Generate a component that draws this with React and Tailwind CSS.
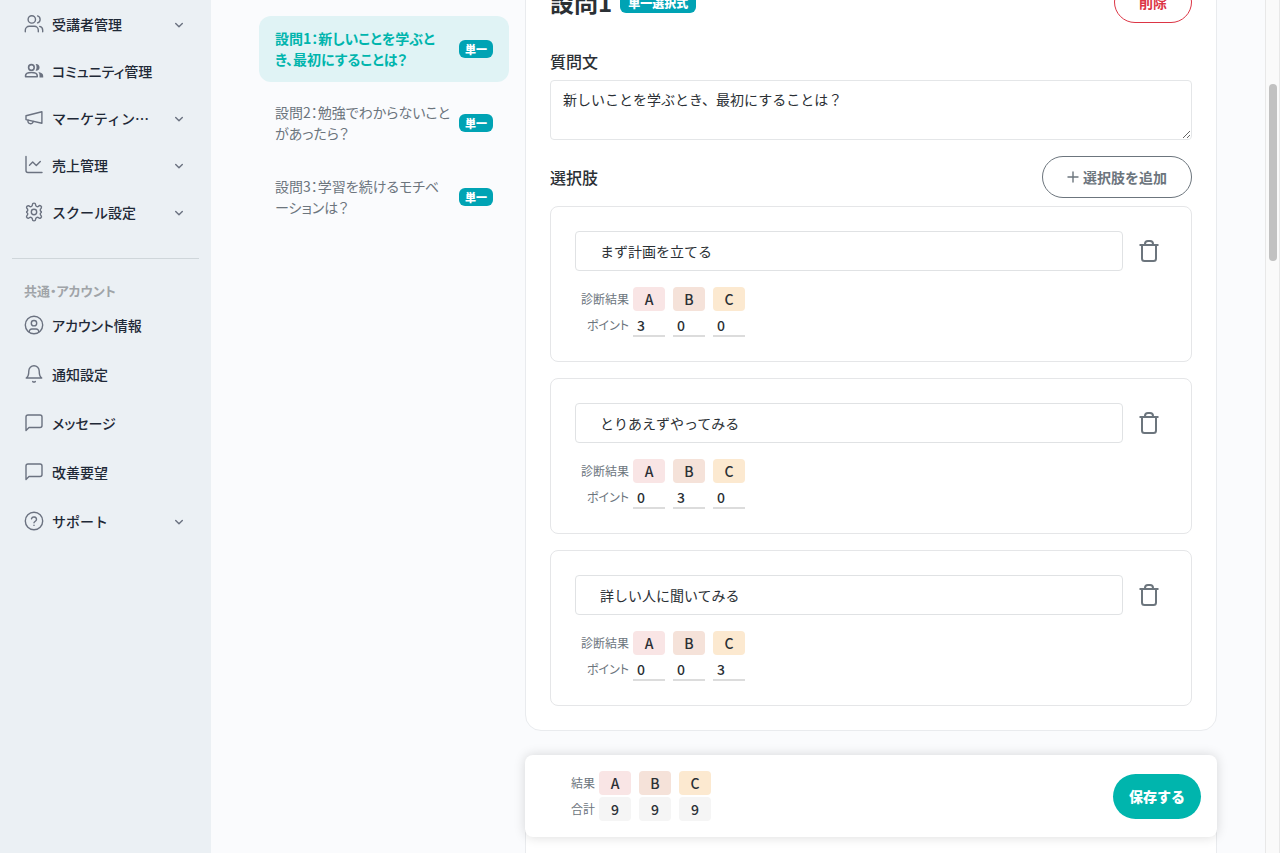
import { useState } from "react";
import clsx from "clsx";

const stroke = {
  width: 20,
  height: 20,
  viewBox: "0 0 20 20",
  fill: "none",
  stroke: "currentColor",
  strokeWidth: 1.4,
  strokeLinecap: "round",
  strokeLinejoin: "round",
  "aria-hidden": true,
};

const UsersIcon = () => (
  <svg {...stroke}>
    <circle cx="7.8" cy="5.4" r="3.7" />
    <path d="M1.3 17.8v-1.6a4 4 0 0 1 4-4h5a4 4 0 0 1 4 4v1.6" />
    <path d="M13.6 1.9a3.7 3.7 0 0 1 0 7M18.7 17.8v-1.6a4 4 0 0 0-3-3.8" />
  </svg>
);

const CommunityIcon = () => (
  <svg {...stroke} strokeWidth="1.6">
    <circle cx="7.4" cy="6.4" r="2.8" />
    <path d="M1.6 15.7v-1.2c0-2 3-3 5.8-3s5.800 1 5.800 3v1.200z" />
    <path d="M11.600 3.100a3.400 3.400 0 1 1 0 6.700c1.300-2 1.300-4.700 0-6.700z" fill="currentColor" stroke="none" />
    <path d="M14.300 11.100c2.700.5 4.900 1.600 4.900 3.600v1.800h-3.700v-2c0-1.400-.4-2.400-1.200-3.400z" fill="currentColor" stroke="none" />
  </svg>
);

const MegaphoneIcon = () => (
  <svg {...stroke}>
    <path d="M2 7.700 17.900 3.700v11.600L2 11.600z" />
    <path d="M9.300 13.400a2.700 2.700 0 1 1-5.200-1.300" />
  </svg>
);

const ChartIcon = () => (
  <svg {...stroke}>
    <path d="M2 1.500v14a2 2 0 0 0 2 2h14" />
    <path d="M5.500 10.200 8.700 7.100l3.600 3.500 4-4.200" />
  </svg>
);

const GearIcon = () => (
  <svg {...stroke}>
    <circle cx="10" cy="10" r="2.700" />
    <path d="M8.400 2.700a1.600 1.600 0 0 1 3.200 0 1.900 1.900 0 0 0 2.900 1.700 1.600 1.600 0 0 1 2.700 1.800l-.1.200a1.900 1.900 0 0 0 .2 3.300 .6.600 0 0 1 0 .6 1.900 1.900 0 0 0-.2 3.300 1.600 1.600 0 0 1-2.600 2 1.900 1.900 0 0 0-2.900 1.700 1.600 1.600 0 0 1-3.200 0 1.900 1.900 0 0 0-2.900-1.700 1.600 1.600 0 0 1-2.600-2 1.900 1.900 0 0 0-.2-3.300.6.600 0 0 1 0-.6 1.900 1.900 0 0 0 .2-3.300 1.600 1.600 0 0 1 2.600-2 1.900 1.900 0 0 0 2.900-1.700z" />
  </svg>
);

const AccountIcon = () => (
  <svg {...stroke}>
    <circle cx="10" cy="10" r="8.700" />
    <circle cx="10" cy="8.200" r="2.700" />
    <path d="M5.300 17.200v-.7a2.500 2.500 0 0 1 2.500-2.500h4.400a2.500 2.500 0 0 1 2.500 2.500v.7" />
  </svg>
);

const BellIcon = () => (
  <svg {...stroke}>
    <path d="M4.800 7a5.200 5.200 0 0 1 10.400 0c0 5.500 2.600 7 2.600 7H2.200s2.600-1.500 2.600-7z" />
    <path d="M8.700 17.500a1.600 1.600 0 0 0 2.600 0" />
  </svg>
);

const ChatIcon = () => (
  <svg {...stroke}>
    <path d="M2 17.500V4a2 2 0 0 1 2-2h12a2 2 0 0 1 2 2v8.500a2 2 0 0 1-2 2H5z" />
  </svg>
);

const HelpIcon = () => (
  <svg {...stroke}>
    <circle cx="10" cy="10" r="8.700" />
    <path d="M7.500 7.800a2.550 2.550 0 0 1 5 .7c0 1.700-2.500 2.200-2.500 3.200M10 14.300v.1" />
  </svg>
);

const ChevronIcon = () => (
  <svg {...stroke} width="12" height="12" viewBox="0 0 12 12">
    <path d="M2.700 4.500 6 7.800l3.300-3.300" />
  </svg>
);

const PlusIcon = () => (
  <svg {...stroke} width="12" height="12" viewBox="0 0 12 12">
    <path d="M6 1v10M1 6h10" />
  </svg>
);

const TrashIcon = () => (
  <svg {...stroke} width="24" height="24" viewBox="0 0 24 24" strokeWidth="2" strokeLinecap="butt">
    <path d="M2.500 6h19M5 6v13.500A2.500 2.500 0 0 0 7.500 22h9a2.500 2.500 0 0 0 2.500-2.500V6M8 6V5a3 3 0 0 1 3-3h2a3 3 0 0 1 3 3v1" />
  </svg>
);

const mainMenu = [
  { name: "受講者管理", icon: UsersIcon, sub: true },
  { name: "コミュニティ管理", icon: CommunityIcon },
  { name: "マーケティング管理", icon: MegaphoneIcon, sub: true },
  { name: "売上管理", icon: ChartIcon, sub: true },
  { name: "スクール設定", icon: GearIcon, sub: true },
];

const accountMenu = [
  { name: "アカウント情報", icon: AccountIcon },
  { name: "通知設定", icon: BellIcon },
  { name: "メッセージ", icon: ChatIcon },
  { name: "改善要望", icon: ChatIcon },
  { name: "サポート", icon: HelpIcon, sub: true },
];

const questions = [
  "設問1：新しいことを学ぶとき、最初にすることは？",
  "設問2：勉強でわからないことがあったら？",
  "設問3：学習を続けるモチベーションは？",
];

const results = [
  { name: "A", color: "bg-[#f9e5e5]" },
  { name: "B", color: "bg-[#f5e2d9]" },
  { name: "C", color: "bg-[#fce9d0]" },
];

const initialChoices = [
  { text: "まず計画を立てる", points: [3, 0, 0] },
  { text: "とりあえずやってみる", points: [0, 3, 0] },
  { text: "詳しい人に聞いてみる", points: [0, 0, 3] },
];

function MenuItem({ item, className }) {
  const Icon = item.icon;
  const base = "flex w-full items-center gap-2 px-6 text-left text-sm font-medium text-[#1f2937]";

  if (item.sub) {
    return (
      <button className={clsx(base, "[font-feature-settings:normal]", className)}>
        <span className="shrink-0 text-[#6b7280]">
          <Icon />
        </span>
        <span className="w-[100px] truncate">{item.name}</span>
        <span className="ml-auto pt-0.5 pr-0.5 text-[#6b7280]">
          <ChevronIcon />
        </span>
      </button>
    );
  }

  return (
    <a href="#" className={clsx(base, className)}>
      <span className="shrink-0 text-[#6b7280]">
        <Icon />
      </span>
      <span className="whitespace-nowrap">{item.name}</span>
    </a>
  );
}

function Sidebar() {
  return (
    <aside className="w-[211px] shrink-0 bg-[#ebf0f4]">
      <nav>
        {mainMenu.map((item) => (
          <MenuItem key={item.name} item={item} className="h-[47px]" />
        ))}
        <hr className="mx-3 mt-[23px] border-[#cfd6da]" />
        <p className="mt-6 px-6 text-[13px] leading-4 font-bold text-[#a0a4a8]">共通・アカウント</p>
        <div className="mt-px">
          {accountMenu.map((item) => (
            <MenuItem key={item.name} item={item} className="h-[49px]" />
          ))}
        </div>
      </nav>
    </aside>
  );
}

function ResultHead({ label }) {
  return (
    <tr className="h-6">
      <th scope="row" className="w-[58px] pr-1 text-right font-normal text-[#6c757d]">
        {label}
      </th>
      {results.map((r) => (
        <th key={r.name} scope="col" className="pr-2 align-top">
          <span className={clsx("block w-8 rounded-sm text-center text-sm leading-6 font-medium", r.color)}>
            {r.name}
          </span>
        </th>
      ))}
    </tr>
  );
}

function Choice({ choice, onText, onPoint, onRemove }) {
  return (
    <div className="rounded-lg border border-[#e5e6e8] p-6">
      <div className="flex items-center gap-3.5">
        <input
          aria-label="選択肢"
          value={choice.text}
          onChange={(e) => onText(e.target.value)}
          className="h-10 min-w-0 flex-1 rounded-sm border border-[#e0e2e4] px-6 text-sm [font-feature-settings:normal]"
        />
        <button aria-label="選択肢を削除" onClick={onRemove} className="mr-1.5 text-[#6c757d]">
          <TrashIcon />
        </button>
      </div>
      <table className="mt-4 border-collapse text-xs">
        <tbody>
          <ResultHead label="診断結果" />
          <tr>
            <th scope="row" className="pt-0.5 pr-1 text-right font-normal text-[#6c757d]">
              ポイント
            </th>
            {results.map((r, i) => (
              <td key={r.name} className="pt-0.5 pr-2">
                <input
                  aria-label={r.name}
                  value={choice.points[i]}
                  onChange={(e) => onPoint(i, e.target.value)}
                  className="block h-6 w-8 border-b-2 border-[#dcdcdc] px-1 pt-0.5 text-sm font-medium [font-feature-settings:normal]"
                />
              </td>
            ))}
          </tr>
        </tbody>
      </table>
    </div>
  );
}

export default function App() {
  const [active, setActive] = useState(0);
  const [body, setBody] = useState("新しいことを学ぶとき、最初にすることは？");
  const [choices, setChoices] = useState(initialChoices);

  const update = (i, patch) => setChoices(choices.map((c, n) => (n === i ? { ...c, ...patch } : c)));

  return (
    <div className="flex h-screen overflow-hidden bg-[#fafbfd] font-['Noto_Sans_CJK_JP',sans-serif] text-[#2b3035] [font-feature-settings:'palt']">
      <Sidebar />

      <main className="flex min-w-0 flex-1 items-start gap-4 px-12">
        {/* Question list */}
        <ul className="flex w-[250px] shrink-0 flex-col gap-2 pt-4">
          {questions.map((q, i) => (
            <li key={q}>
              <button
                onClick={() => setActive(i)}
                className={clsx(
                  "flex w-full items-center gap-2 rounded-xl px-4 py-3 text-left text-sm leading-[21px]",
                  active === i ? "bg-[#e0f3f5] font-bold text-[#00b5ad]" : "text-[#6c757d]"
                )}
              >
                <span className="flex-1">{q}</span>
                <span className="shrink-0 rounded-md bg-[#00a3b4] px-1.5 text-[11px] leading-[18px] font-black text-white">
                  単一
                </span>
              </button>
            </li>
          ))}
        </ul>

        {/* Editor */}
        <div className="relative h-screen min-w-0 flex-1">
          <div className="-mt-11">
            <section className="rounded-2xl border border-[#e9ebee] bg-white p-6">
              <div className="flex h-[42px] items-center gap-2">
                <h2 className="text-2xl font-bold">設問1</h2>
                <span className="rounded-md bg-[#00a3b4] px-2 pt-px text-xs leading-5 font-black text-white">
                  単一選択式
                </span>
                <button className="ml-auto h-[42px] rounded-full border border-[#dc3545] px-6 text-sm font-bold text-[#dc3545]">
                  削除
                </button>
              </div>

              <label htmlFor="body" className="mt-6 mb-[5px] block leading-7 font-medium">
                質問文
              </label>
              <textarea
                id="body"
                value={body}
                onChange={(e) => setBody(e.target.value)}
                className="block h-[60px] w-full resize rounded-sm border border-[#e4e6e8] px-3 py-2 text-sm leading-[21px] [font-feature-settings:normal]"
              />

              <div className="mt-4 flex items-center justify-between">
                <h3 className="font-medium">選択肢</h3>
                <button
                  onClick={() => setChoices([...choices, { text: "", points: [0, 0, 0] }])}
                  className="flex h-[42px] items-center gap-1 rounded-full border border-[#6c757d] px-6 text-sm font-bold text-[#6c757d] [font-feature-settings:normal]"
                >
                  <PlusIcon />
                  選択肢を追加
                </button>
              </div>

              <div className="mt-2 flex flex-col gap-4">
                {choices.map((choice, i) => (
                  <Choice
                    key={i}
                    choice={choice}
                    onText={(text) => update(i, { text })}
                    onPoint={(n, value) =>
                      update(i, { points: choice.points.map((p, k) => (k === n ? Number(value) || 0 : p)) })
                    }
                    onRemove={() => setChoices(choices.filter((_, n) => n !== i))}
                  />
                ))}
              </div>
            </section>
            <section className="mt-6 h-60 rounded-2xl border border-[#e9ebee] bg-white" />
          </div>

          {/* Totals bar */}
          <div className="absolute inset-x-0 bottom-4 flex items-center justify-between rounded-lg bg-white p-4 shadow-[0_0_12px_rgba(0,0,0,0.15)]">
            <table className="border-collapse text-xs">
              <tbody>
                <ResultHead label="結果" />
                <tr>
                  <th scope="row" className="pt-0.5 pr-1 text-right font-normal text-[#6c757d]">
                    合計
                  </th>
                  {results.map((r) => (
                    <td key={r.name} className="pt-0.5 pr-2">
                      <span className="block w-8 rounded-sm bg-[#f5f5f5] text-center text-sm leading-6 font-medium">9</span>
                    </td>
                  ))}
                </tr>
              </tbody>
            </table>
            <button className="h-[45px] rounded-full bg-[#00b5ad] px-4 text-sm font-black text-white [font-feature-settings:normal]">
              保存する
            </button>
          </div>
        </div>
      </main>

      {/* Scrollbar */}
      <div className="w-[15px] shrink-0 border-x border-[#e8e8e8] bg-[#fafafa] px-[3px] pt-[84px]">
        <div className="h-[177px] w-2 rounded-full bg-[#c1c1c1]" />
      </div>
    </div>
  );
}
